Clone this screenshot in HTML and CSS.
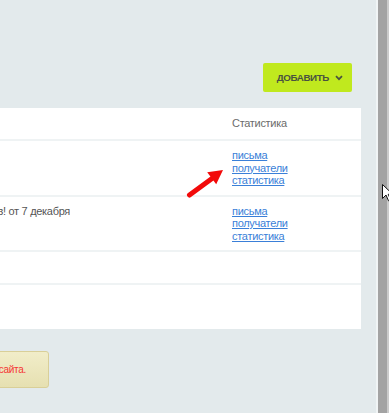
FILE: index.html
```html
<!DOCTYPE html>
<html lang="ru">
<head>
    <meta charset="UTF-8">
    <title>Рассылки</title>
    <link rel="stylesheet" href="styles.css">
</head>
<body>

<div class="window">
    <div class="viewport">
        <div class="page">
            <div class="toolbar">
                <button class="add-btn">ДОБАВИТЬ
                    <svg width="8" height="6" viewBox="0 0 8 6"><path d="M1 1.2l3 3 3-3" fill="none" stroke="#4a5240" stroke-width="1.7"/></svg>
                </button>
            </div>

            <div class="panel">
                <div class="row head">
                    <div class="cell name"></div>
                    <div class="cell"></div>
                    <div class="cell stats">Статистика</div>
                </div>
                <div class="row">
                    <div class="cell name"></div>
                    <div class="cell"></div>
                    <div class="cell stats">
                        <a href="#">письма</a>
                        <a href="#">получатели</a>
                        <a href="#">статистика</a>
                    </div>
                </div>
                <div class="row">
                    <div class="cell name">Скидки для постоянных клиентов! от 7 декабря</div>
                    <div class="cell"></div>
                    <div class="cell stats">
                        <a href="#">письма</a>
                        <a href="#">получатели</a>
                        <a href="#">статистика</a>
                    </div>
                </div>
                <div class="row short">
                    <div class="cell name"></div>
                    <div class="cell"></div>
                    <div class="cell stats"></div>
                </div>
                <div class="row last">
                    <div class="cell name"></div>
                    <div class="cell"></div>
                    <div class="cell stats"></div>
                </div>
            </div>

            <div class="notice">Подтвердите адрес отправителя в настройках сайта.</div>
        </div>
    </div>
    <div class="scrollbar"></div>
</div>

<!-- annotation arrow -->
<svg class="pointer-arrow" width="42" height="34" viewBox="0 0 42 34">
    <line x1="3.5" y1="29" x2="26" y2="12.5" stroke="#f20a0a" stroke-width="5" stroke-linecap="round"/>
    <path d="M37 4L30.2 18.3L21.2 6.3Z" fill="#f20a0a"/>
</svg>

<svg class="cursor" width="12" height="18" viewBox="0 0 12 18">
    <path d="M0.5 0.5V14.5L4 11L6.5 16.8L8.7 15.9L6.2 10.3H10.8Z" fill="#fff" stroke="#111" stroke-width="1"/>
</svg>

</body>
</html>
```

FILE: styles.css
```css
body {
    margin: 0;
    font-family: 'Liberation Sans', Arial, sans-serif;
    font-size: 11px;
    letter-spacing: -0.3px;
    color: #555;
    background-color: #e3eaec;
    overflow: hidden;
}
.window {
    display: flex;
    height: 413px;
}
.viewport {
    flex: 1;
    overflow: hidden;
}
.page {
    margin: 0 15px 0 -400px;
}
.toolbar {
    display: flex;
    justify-content: flex-end;
    padding: 63px 9px 0 0;
}
.add-btn {
    display: flex;
    align-items: center;
    gap: 6px;
    height: 29px;
    padding: 0 9px 0 14px;
    border: none;
    border-radius: 2px;
    background-color: #c0e91e;
    color: #4a5240;
    font-family: 'Liberation Sans', Arial, sans-serif;
    font-size: 9.8px;
    font-weight: bold;
    letter-spacing: -0.4px;
}
.panel {
    margin-top: 16px;
    background-color: #fff;
}
.row {
    display: grid;
    grid-template-columns: 1fr 162px 129px;
    border-bottom: 2px solid #eff3f4;
    min-height: 53px;
}
.row.head {
    min-height: 31px;
    align-items: center;
    color: #6b6b6b;
}
.row.short {
    min-height: 31px;
}
.row.last {
    min-height: 44px;
    border-bottom: none;
}
.cell {
    padding: 8px 0;
    line-height: 12.5px;
}
.head .cell {
    padding: 0;
}
.cell.name {
    text-align: right;
    white-space: nowrap;
    overflow: hidden;
}
.stats a {
    display: block;
    color: #3a7fd8;
    text-decoration: underline;
}
.notice {
    box-sizing: border-box;
    width: 449px;
    height: 37px;
    margin-top: 22px;
    padding-right: 22px;
    display: flex;
    align-items: center;
    justify-content: flex-end;
    border: 1px solid #d9cf98;
    border-radius: 3px;
    background: linear-gradient(#f1edc9, #e6e0b1);
    color: #f53535;
    font-size: 10px;
}
.scrollbar {
    width: 11px;
    border-left: 2px solid #f0f4f5;
    background-color: #a3a3a3;
    box-shadow: inset -2px 0 0 #cbcbcb;
}
.pointer-arrow {
    position: absolute;
    left: 186px;
    top: 166px;
}
.cursor {
    position: absolute;
    left: 382px;
    top: 184px;
}
```
